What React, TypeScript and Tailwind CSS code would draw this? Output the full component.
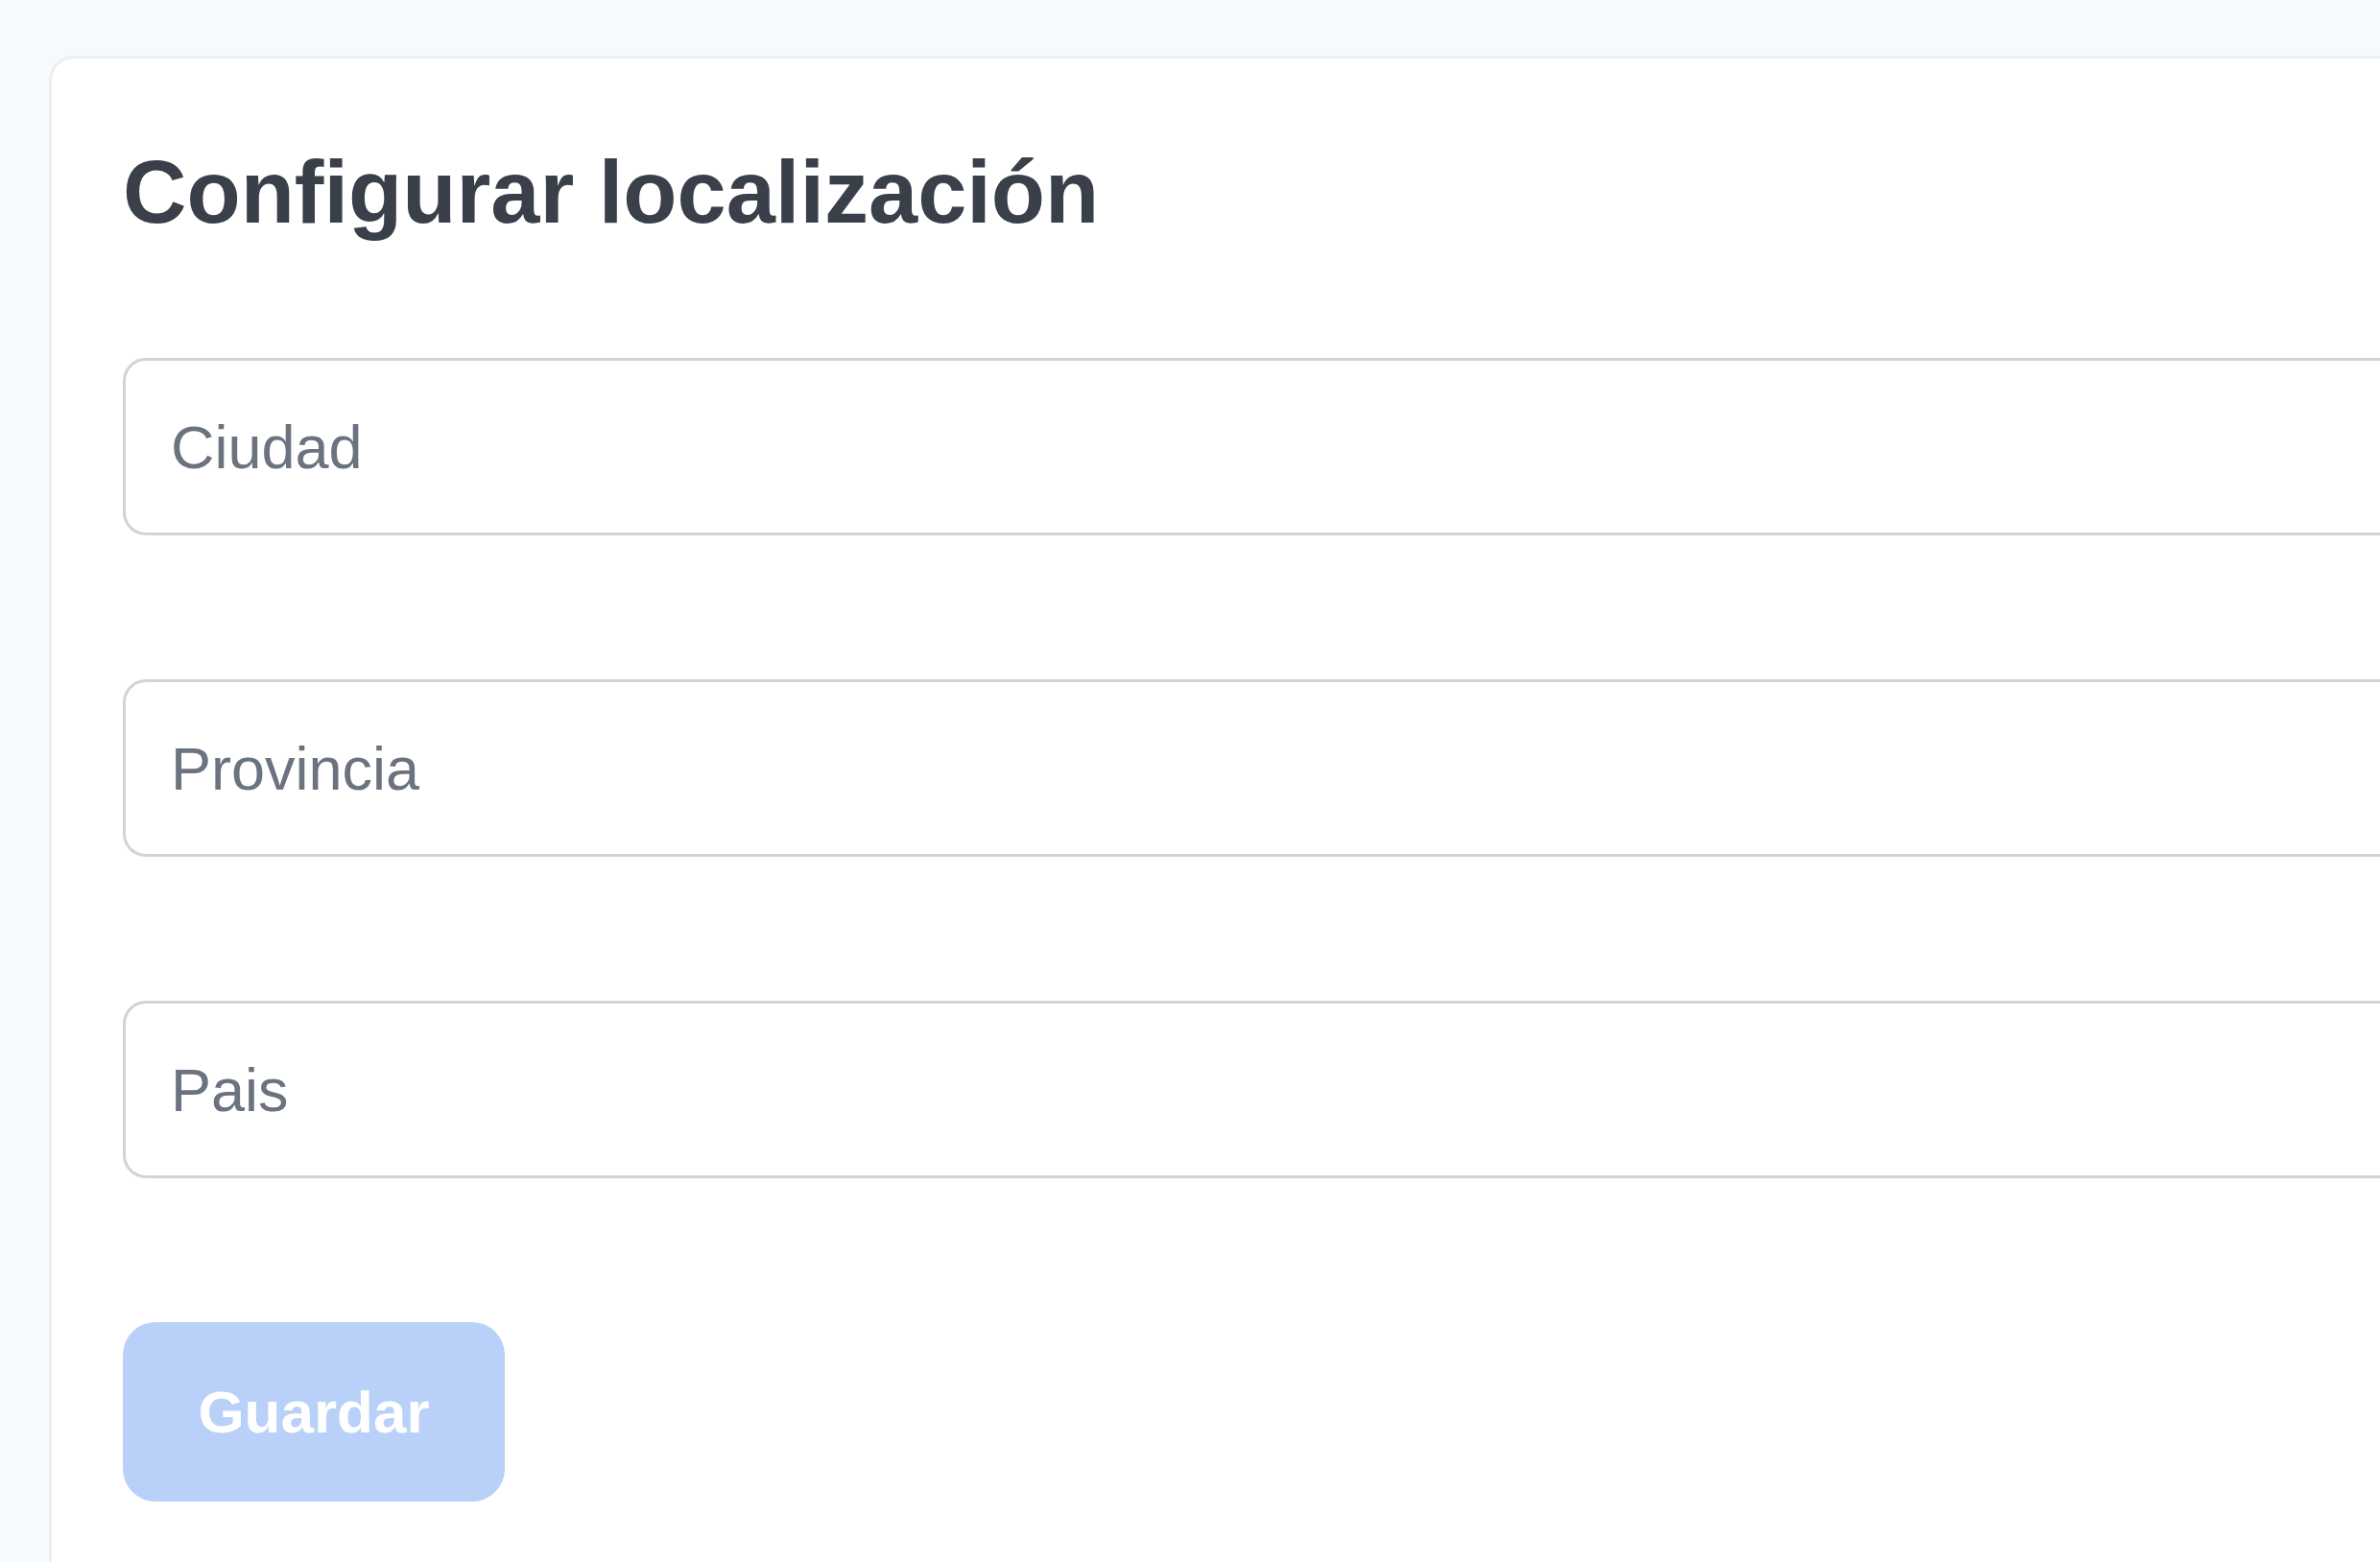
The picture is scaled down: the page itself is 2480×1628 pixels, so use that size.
import { useState } from "react";

const fields = [
  { name: "ciudad", placeholder: "Ciudad" },
  { name: "provincia", placeholder: "Provincia" },
  { name: "pais", placeholder: "Pais" },
];

const App = () => {
  const [values, setValues] = useState<Record<string, string>>({});

  const isValid = fields.every((f) => (values[f.name] || "").trim() !== "");

  return (
    <div className="h-[1628px] overflow-hidden bg-[#f7fafd] pl-[51px] pt-[58px] font-['Liberation_Sans',Arial,sans-serif]">
      <div className="w-[2600px] h-[1700px] bg-white border-[3px] border-[#eceef2] rounded-[26px] pl-[74px] pt-[93px]">
        <h2 className="text-[92px] leading-[92px] font-bold text-[#3a4049]">
          Configurar localización
        </h2>

        {/* Form */}
        <form className="mt-[127px] flex flex-col gap-[150px]" onSubmit={(e) => e.preventDefault()}>
          {fields.map((field) => (
            <input
              key={field.name}
              type="text"
              placeholder={field.placeholder}
              value={values[field.name] || ""}
              onChange={(e) => setValues({ ...values, [field.name]: e.target.value })}
              className="w-[2450px] h-[185px] border-[3px] border-[#cfd4dc] rounded-[24px] pl-[47px] text-[63px] text-[#374151] placeholder:text-[#6b7280] outline-none"
            />
          ))}
          <div>
            <button
              type="submit"
              disabled={!isValid}
              className="w-[398px] h-[187px] rounded-[34px] bg-[#b9d1f9] text-white text-[62px] font-bold"
            >
              Guardar
            </button>
          </div>
        </form>
      </div>
    </div>
  );
};

export default App;
